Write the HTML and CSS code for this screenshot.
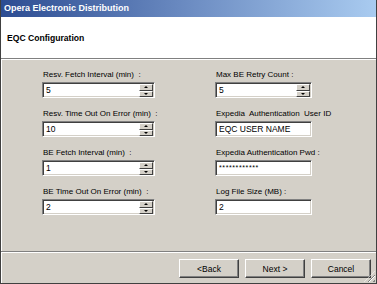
FILE: index.html
```html
<!DOCTYPE html>
<html lang="en">
<head>
  <meta charset="UTF-8">
  <title>Opera Electronic Distribution</title>
  <link rel="stylesheet" href="styles.css">
</head>
<body>
  <div class="window">
    <div class="titlebar">Opera Electronic Distribution</div>
    <div class="header">
      <h1>EQC Configuration</h1>
    </div>
    <div class="panel">
      <div class="fields">
        <div class="field">
          <label>Resv. Fetch Interval (min)  :</label>
          <div class="input spin"><span class="value">5</span><span class="spinner"><span class="up"></span><span class="down"></span></span></div>
        </div>
        <div class="field right">
          <label>Max BE Retry Count :</label>
          <div class="input spin"><span class="value">5</span><span class="spinner"><span class="up"></span><span class="down"></span></span></div>
        </div>
        <div class="field">
          <label>Resv. Time Out On Error (min)  :</label>
          <div class="input spin"><span class="value">10</span><span class="spinner"><span class="up"></span><span class="down"></span></span></div>
        </div>
        <div class="field right">
          <label>Expedia  Authentication  User ID</label>
          <div class="input"><span class="value">EQC USER NAME</span></div>
        </div>
        <div class="field">
          <label>BE Fetch Interval (min)  :</label>
          <div class="input spin"><span class="value">1</span><span class="spinner"><span class="up"></span><span class="down"></span></span></div>
        </div>
        <div class="field right">
          <label>Expedia Authentication Pwd :</label>
          <div class="input"><span class="value pwd">************</span></div>
        </div>
        <div class="field">
          <label>BE Time Out On Error (min)  :</label>
          <div class="input spin"><span class="value">2</span><span class="spinner"><span class="up"></span><span class="down"></span></span></div>
        </div>
        <div class="field right">
          <label>Log File Size (MB) :</label>
          <div class="input"><span class="value">2</span></div>
        </div>
      </div>
    </div>
    <div class="footer">
      <button class="btn">&lt;Back</button>
      <button class="btn">Next &gt;</button>
      <button class="btn">Cancel</button>
    </div>
    <span class="grip"></span>
  </div>
</body>
</html>
```

FILE: styles.css
```css
/* classic win dialog */
body {
  margin: 0;
  font-family: 'Liberation Sans', Arial, sans-serif;
  color: #000;
  background: #d4d0c8;
}
.window {
  position: relative;
  width: 377px;
  height: 284px;
  box-sizing: border-box;
  border: 1px solid #404040;
  border-top: none;
  background: #d4d0c8;
  display: flex;
  flex-direction: column;
}
.titlebar {
  height: 17px;
  line-height: 16px;
  padding-left: 3px;
  font-size: 9px;
  font-weight: bold;
  color: #fff;
  background: linear-gradient(to right, #2c4c92, #6c8cc2 50%, #a9cbf0);
}
.header {
  height: 41px;
  display: flex;
  align-items: center;
  padding-left: 6px;
  background: #fff;
  border-bottom: 1px solid #808080;
}
.header h1 {
  margin: 0;
  font-size: 8.6px;
  font-weight: bold;
}
.panel {
  height: 192px;
  border-top: 1px solid #fff;
  box-shadow: inset 1px 0 #fff;
  padding: 9px 0 0 41px;
  box-sizing: border-box;
}
.fields {
  display: grid;
  grid-template-columns: 113px 97px;
  column-gap: 60px;
  row-gap: 10px;
}
.field label {
  display: block;
  height: 11px;
  line-height: 11px;
  margin: 0 0 2px 1px;
  font-size: 8px;
  white-space: pre;
}
.input {
  height: 16px;
  box-sizing: border-box;
  display: flex;
  align-items: center;
  background: #fff;
  border-top: 1px solid #808080;
  border-left: 1px solid #808080;
  border-bottom: 1px solid #fff;
  border-right: 1px solid #fff;
  box-shadow: inset 1px 1px #404040, inset -1px -1px #d4d0c8;
  padding: 0 1px 0 3px;
}
.value {
  flex: 1;
  font-size: 8.5px;
  line-height: 12px;
}
.value.pwd {
  font-size: 7px;
  letter-spacing: 0.6px;
}
.spinner {
  width: 14px;
  height: 13px;
  display: flex;
  flex-direction: column;
  margin-top: 1px;
}
.spinner span {
  flex: 1;
  position: relative;
  background: #d4d0c8;
  border-top: 1px solid #fff;
  border-left: 1px solid #fff;
  border-bottom: 1px solid #404040;
  border-right: 1px solid #404040;
  box-sizing: border-box;
}
.spinner .up::after,
.spinner .down::after {
  content: "";
  position: absolute;
  left: 4px;
  top: 1px;
  border-left: 2px solid transparent;
  border-right: 2px solid transparent;
}
.spinner .up::after {
  border-bottom: 2px solid #000;
}
.spinner .down::after {
  border-top: 2px solid #000;
}
.footer {
  flex: 1;
  border-top: 1px solid #808080;
  box-shadow: inset 0 1px #fff, inset 1px 0 #fff;
  display: flex;
  justify-content: flex-end;
  align-items: flex-start;
  gap: 6px;
  padding: 7px 5px 0 0;
}
.btn {
  width: 60px;
  height: 19px;
  padding: 0;
  font-family: 'Liberation Sans', Arial, sans-serif;
  font-size: 8.5px;
  color: #000;
  background: #d4d0c8;
  border-top: 1px solid #fff;
  border-left: 1px solid #fff;
  border-bottom: 1px solid #404040;
  border-right: 1px solid #404040;
  box-shadow: inset -1px -1px #808080;
}
.grip {
  position: absolute;
  right: 1px;
  bottom: 1px;
  width: 11px;
  height: 11px;
  background: repeating-linear-gradient(135deg, transparent 0 2px, #808080 2px 3px, #fff 3px 4px);
  clip-path: polygon(100% 0, 100% 100%, 0 100%);
}
```
